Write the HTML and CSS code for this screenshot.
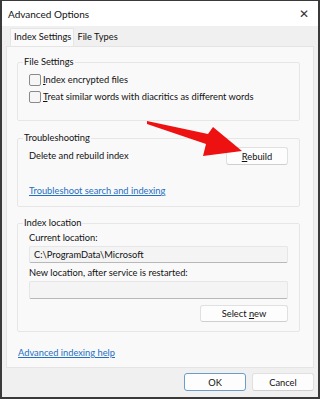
FILE: index.html
```html
<!DOCTYPE html>
<html lang="en">
<head>
  <meta charset="UTF-8" />
  <title>Advanced Options</title>
  <link rel="stylesheet" href="styles.css">
</head>
<body>
<div class="window">
  <div class="titlebar">
    <span class="title">Advanced Options</span>
    <span class="close">&#x2715;</span>
  </div>

  <div class="dialog">
    <div class="tabs">
      <div class="tab active">Index Settings</div>
      <div class="tab">File Types</div>
    </div>

    <div class="panel">
      <fieldset class="group group-files">
        <legend>File Settings</legend>
        <label class="check"><span class="box"></span><span><u>I</u>ndex encrypted files</span></label>
        <label class="check"><span class="box"></span><span><u>T</u>reat similar words with diacritics as different words</span></label>
      </fieldset>

      <fieldset class="group group-trouble">
        <legend>Troubleshooting</legend>
        <div class="row">
          <span>Delete and rebuild index</span>
          <button class="btn btn-rebuild"><u>R</u>ebuild</button>
        </div>
        <a class="link link-trouble" href="#">Troubleshoot search and indexing</a>
      </fieldset>

      <fieldset class="group group-location">
        <legend>Index location</legend>
        <div class="field-label">Current location:</div>
        <div class="field">C:\ProgramData\Microsoft</div>
        <div class="field-label">New location, after service is restarted:</div>
        <div class="field"></div>
        <div class="row-end">
          <button class="btn btn-select">Select <u>n</u>ew</button>
        </div>
      </fieldset>

      <a class="link link-help" href="#">Advanced indexing help</a>
    </div>

    <div class="footer">
      <button class="btn btn-ok">OK</button>
      <button class="btn btn-cancel">Cancel</button>
    </div>
  </div>

  <svg class="arrow" width="320" height="399" viewBox="0 0 320 399">
    <polygon points="147,121 208,134 213,127 242,151 203,156 206,144 147,124" fill="#ee1111" />
  </svg>
</div>
</body>
</html>
```

FILE: styles.css
```css
* {
  box-sizing: border-box;
}
body {
  margin: 0;
  font-family: Lato, 'Liberation Sans', sans-serif;
  font-size: 9.3px;
  line-height: 14px;
  color: #111;
  background: #2b2b2b;
}
.window {
  position: relative;
  width: 320px;
  height: 399px;
  border: 2px solid #3a3a3a;
  border-top-width: 1px;
  background: #f0f0f0;
  display: flex;
  flex-direction: column;
}
.titlebar {
  height: 25px;
  background: #fff;
  display: flex;
  align-items: center;
  justify-content: space-between;
  padding: 0 9px 0 6px;
}
.title {
  font-size: 10px;
  color: #111;
}
.close {
  font-size: 12px;
  color: #333;
}
.dialog {
  flex: 1;
  display: flex;
  flex-direction: column;
  padding: 0 4px 4px 4px;
}
.tabs {
  display: flex;
  height: 20px;
  padding-top: 3px;
  margin-left: 4px;
}
.tab {
  padding: 1px 2px 0 3px;
  white-space: nowrap;
}
.tab.active {
  background: #fafafa;
  border: 1px solid #e6e6e6;
  border-bottom: none;
  margin-top: -1px;
}
.panel {
  height: 322px;
  background: #f9f9f9;
  border: 1px solid #e4e4e4;
  padding: 8px 13px 0 10px;
  display: flex;
  flex-direction: column;
}
.group {
  margin: 0;
  border: 1px solid #e6e6e6;
  border-radius: 2px;
  padding: 0 11px;
}
.group legend {
  padding: 0 1px;
  margin-left: -6px;
}
.group-files {
  height: 66px;
  padding-top: 2px;
}
.group-trouble {
  margin-top: 10px;
  height: 76px;
  padding-top: 2px;
}
.group-location {
  margin-top: 9px;
  height: 116px;
  padding-top: 1px;
}
.check {
  display: flex;
  align-items: center;
  height: 17px;
  white-space: nowrap;
}
.box {
  width: 12px;
  height: 12px;
  border: 1px solid #8a8a8a;
  border-radius: 2px;
  background: #f6f6f6;
  margin-right: 2px;
  flex-shrink: 0;
}
.row {
  display: flex;
  align-items: center;
  justify-content: space-between;
}
.row-end {
  display: flex;
  justify-content: flex-end;
  margin-top: 6px;
}
.btn {
  font-family: inherit;
  font-size: 9.3px;
  color: #111;
  background: #fdfdfd;
  border: 1px solid #e0e0e0;
  border-bottom-color: #cfcfcf;
  border-radius: 3px;
  height: 18px;
  padding: 0;
}
.btn-rebuild {
  width: 62px;
}
.btn-select {
  width: 88px;
  height: 17px;
}
.link {
  color: #1f6fc2;
  text-decoration: underline;
  white-space: nowrap;
}
.link-trouble {
  display: inline-block;
  margin-top: 19px;
}
.field-label {
  white-space: nowrap;
}
.field {
  height: 17px;
  margin-top: 1px;
  margin-bottom: 3px;
  background: #f4f4f4;
  border: 1px solid #e6e6e6;
  border-bottom-color: #b8b8b8;
  border-radius: 2px;
  padding: 0 4px;
  line-height: 15px;
}
.field + .field-label + .field {
  height: 18px;
}
.link-help {
  margin-top: 14px;
  margin-left: 1px;
}
.footer {
  display: flex;
  justify-content: flex-end;
  gap: 6px;
  padding-top: 5px;
}
.btn-ok {
  width: 62px;
  border: 1px solid #6d9cc9;
}
.btn-cancel {
  width: 62px;
}
.arrow {
  position: absolute;
  left: -2px;
  top: -1px;
  pointer-events: none;
}
```
